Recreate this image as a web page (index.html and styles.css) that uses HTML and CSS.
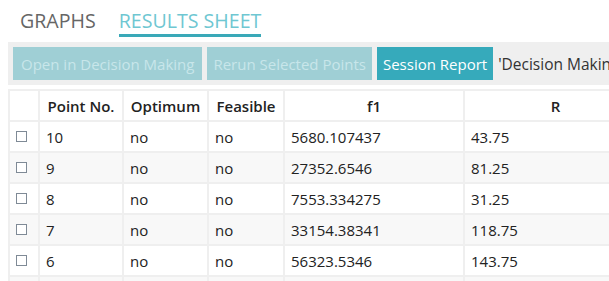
FILE: index.html
```html
<!DOCTYPE html>
<html lang="en">

<head>
    <meta charset="UTF-8">
    <title>Results Sheet</title>
    <link rel="stylesheet" href="styles.css">
</head>

<body>
    <div class="tabs">
        <span class="tab">GRAPHS</span>
        <span class="tab active">RESULTS SHEET</span>
    </div>
    <div class="toolbar">
        <button class="btn wide" disabled>Open in Decision Making</button>
        <button class="btn" disabled>Rerun Selected Points</button>
        <button class="btn primary">Session Report</button>
        <span class="status">'Decision Making'</span>
    </div>
    <table class="grid">
        <colgroup>
            <col class="c-check">
            <col class="c-point">
            <col class="c-opt">
            <col class="c-feas">
            <col class="c-f1">
            <col class="c-r">
        </colgroup>
        <thead>
            <tr>
                <th></th>
                <th>Point No.</th>
                <th>Optimum</th>
                <th>Feasible</th>
                <th>f1</th>
                <th>R</th>
            </tr>
        </thead>
        <tbody>
            <tr>
                <td><i class="check"></i></td>
                <td>10</td>
                <td>no</td>
                <td>no</td>
                <td>5680.107437</td>
                <td>43.75</td>
            </tr>
            <tr>
                <td><i class="check"></i></td>
                <td>9</td>
                <td>no</td>
                <td>no</td>
                <td>27352.6546</td>
                <td>81.25</td>
            </tr>
            <tr>
                <td><i class="check"></i></td>
                <td>8</td>
                <td>no</td>
                <td>no</td>
                <td>7553.334275</td>
                <td>31.25</td>
            </tr>
            <tr>
                <td><i class="check"></i></td>
                <td>7</td>
                <td>no</td>
                <td>no</td>
                <td>33154.38341</td>
                <td>118.75</td>
            </tr>
            <tr>
                <td><i class="check"></i></td>
                <td>6</td>
                <td>no</td>
                <td>no</td>
                <td>56323.5346</td>
                <td>143.75</td>
            </tr>
            <tr class="cut">
                <td></td>
                <td></td>
                <td></td>
                <td></td>
                <td></td>
                <td></td>
            </tr>
        </tbody>
    </table>
</body>

</html>
```

FILE: styles.css
```css
* {
    margin: 0;
    padding: 0;
    box-sizing: border-box;
}

html,
body {
    overflow: hidden;
    background: #fff;
}

body {
    font-family: "Open Sans", "Noto Sans", sans-serif;
    color: #222;
}

.tabs {
    display: flex;
    gap: 23px;
    height: 42px;
    padding-left: 20px;
    padding-top: 9px;
}

.tab {
    font-size: 19.6px;
    color: #666;
    height: 28px;
    line-height: 24px;
}

.tab.active {
    color: #6fc7d2;
    border-bottom: 3px solid #3aa9b8;
}

.toolbar {
    display: flex;
    align-items: center;
    gap: 5px;
    margin-left: 8px;
    height: 43px;
    padding: 0 5px;
    background: #efefef;
    white-space: nowrap;
}

.btn {
    height: 33px;
    padding: 0 6px;
    border: none;
    font-family: inherit;
    font-size: 15px;
    color: #fff;
    background: #36aabb;
}

.btn.wide {
    padding: 0 8px;
}

.btn[disabled] {
    background: #9fcfd5;
    color: #c8e6ea;
}

.status {
    font-size: 15.5px;
    color: #333;
}

.grid {
    margin: 4px 0 0 8px;
    width: 640px;
    table-layout: fixed;
    border-spacing: 2px;
    background: #efefef;
    font-size: 15px;
}

.c-check { width: 28px; }
.c-point { width: 82px; }
.c-opt { width: 83px; }
.c-feas { width: 74px; }
.c-f1 { width: 178px; }

.grid th,
.grid td {
    height: 29px;
    background: #fff;
    white-space: nowrap;
    overflow: hidden;
}

.grid th {
    font-weight: 600;
    text-align: center;
}

.grid td {
    padding-left: 6px;
}

.grid tbody tr:nth-child(even) td {
    background: #f8f8f8;
}

.check {
    display: block;
    width: 11px;
    height: 11px;
    border: 1px solid #7f8a96;
    background: #fff;
}
```
